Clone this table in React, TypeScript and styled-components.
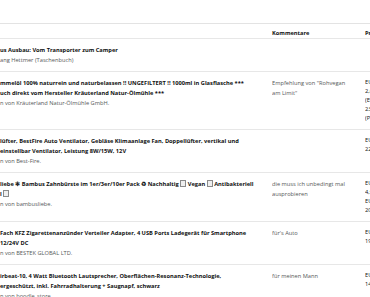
import React from 'react';
import styled, { createGlobalStyle } from 'styled-components';

const GlobalStyle = createGlobalStyle`
  html, body {
    margin: 0;
    padding: 0;
    background: #fff;
  }
  body {
    font-family: "Open Sans", "Liberation Sans", Arial, sans-serif;
    color: #0f1111;
    overflow: hidden;
  }
`;

const Page = styled('div')`
  width: 370px;
  height: 297px;
  overflow: hidden;
  padding-top: 23px;
  box-sizing: border-box;
`;

const Table = styled('div')`
  width: 430px;
  border-top: 1px solid #e3e3e3;
`;

const HeaderRow = styled('div')`
  display: grid;
  grid-template-columns: 272px 93px 1fr;
  height: 14px;
  align-items: end;
  border-bottom: 1px solid #e7e7e7;
  font-size: 5.7px;
  line-height: 10px;
  font-weight: 700;
`;

const Row = styled('div')`
  display: grid;
  grid-template-columns: 272px 93px 1fr;
  padding: 6px 0;
  border-bottom: 1px solid #e7e7e7;
  align-items: start;
`;

const Cell = styled('div')`
  white-space: nowrap;
  overflow: hidden;
  font-size: 5.7px;
  line-height: 10px;
`;

const TitleLine = styled('div')`
  font-weight: 700;
  color: #0f1111;
`;

const ByLine = styled('div')`
  color: #565959;
`;

const Comment = styled('div')`
  white-space: normal;
  color: #565959;
  width: 75px;
`;

const PriceLine = styled('div')`
  line-height: 9px;
  color: #0f1111;
`;

const Tofu = styled('span')`
  display: inline-block;
  width: 4px;
  height: 5px;
  border: 0.5px solid #8a8a8a;
  background: #efefef;
  vertical-align: -0.5px;
`;

interface Item {
  title: React.ReactNode[];
  by: string;
  comment?: string;
  price: string[];
}

const items: Item[] = [
  {
    title: ['us Ausbau: Vom Transporter zum Camper'],
    by: 'ang Hettmer (Taschenbuch)',
    price: [],
  },
  {
    title: [
      'mmelöl 100% naturrein und naturbelassen !! UNGEFILTERT !! 1000ml in Glasflasche ***',
      'uch direkt vom Hersteller Kräuterland Natur-Ölmühle ***',
    ],
    by: 'n von Kräuterland Natur-Ölmühle GmbH.',
    comment: 'Empfehlung von "Rohvegan am Limit"',
    price: ['EUR 26,90', '2,69 € / 100 ml', '(EUR 26,90 / l)', '23.03.2020', '(Preis gesenkt)'],
  },
  {
    title: [
      'lüfter, BestFire Auto Ventilator, Gebläse Klimaanlage Fan, Doppellüfter, vertikal und',
      'einstellbar Ventilator, Leistung 8W/15W, 12V',
    ],
    by: 'n von Best-Fire.',
    price: ['EUR 39,99', '22.03.2020'],
  },
  {
    title: [
      <>liebe ✻ Bambus Zahnbürste im 1er/3er/10er Pack ♻ Nachhaltig <Tofu /> Vegan <Tofu /> Antibakteriell</>,
      <>l <Tofu /></>,
    ],
    by: 'n von bambusliebe.',
    comment: 'die muss ich unbedingt mal ausprobieren',
    price: ['EUR 14,99', '4,99 € / Stück', 'EUR 14,99', '20.03.2020'],
  },
  {
    title: [
      'Fach KFZ Zigarettenanzünder Verteiler Adapter, 4 USB Ports Ladegerät für Smartphone',
      '12/24V DC',
    ],
    by: 'n von BESTEK GLOBAL LTD.',
    comment: "für's Auto",
    price: ['EUR 16,99', '19.03.2020'],
  },
  {
    title: [
      'irbeat-10, 4 Watt Bluetooth Lautsprecher, Oberflächen-Resonanz-Technologie,',
      'ergeschützt, inkl. Fahrradhalterung + Saugnapf, schwarz',
    ],
    by: 'n von boodle_store.',
    comment: 'für meinen Mann',
    price: ['EUR 29,99', '14.03.2020'],
  },
];

export default function App() {
  return (
    <Page>
      <GlobalStyle />
      <Table>
        <HeaderRow>
          <div />
          <div>Kommentare</div>
          <div>Preis</div>
        </HeaderRow>
        {items.map((item, i) => (
          <Row key={i}>
            <Cell>
              {item.title.map((t, j) => (
                <TitleLine key={j}>{t}</TitleLine>
              ))}
              <ByLine>{item.by}</ByLine>
            </Cell>
            <Cell>
              {item.comment && <Comment>{item.comment}</Comment>}
            </Cell>
            <Cell>
              {item.price.map((p, j) => (
                <PriceLine key={j}>{p}</PriceLine>
              ))}
            </Cell>
          </Row>
        ))}
      </Table>
    </Page>
  );
}
